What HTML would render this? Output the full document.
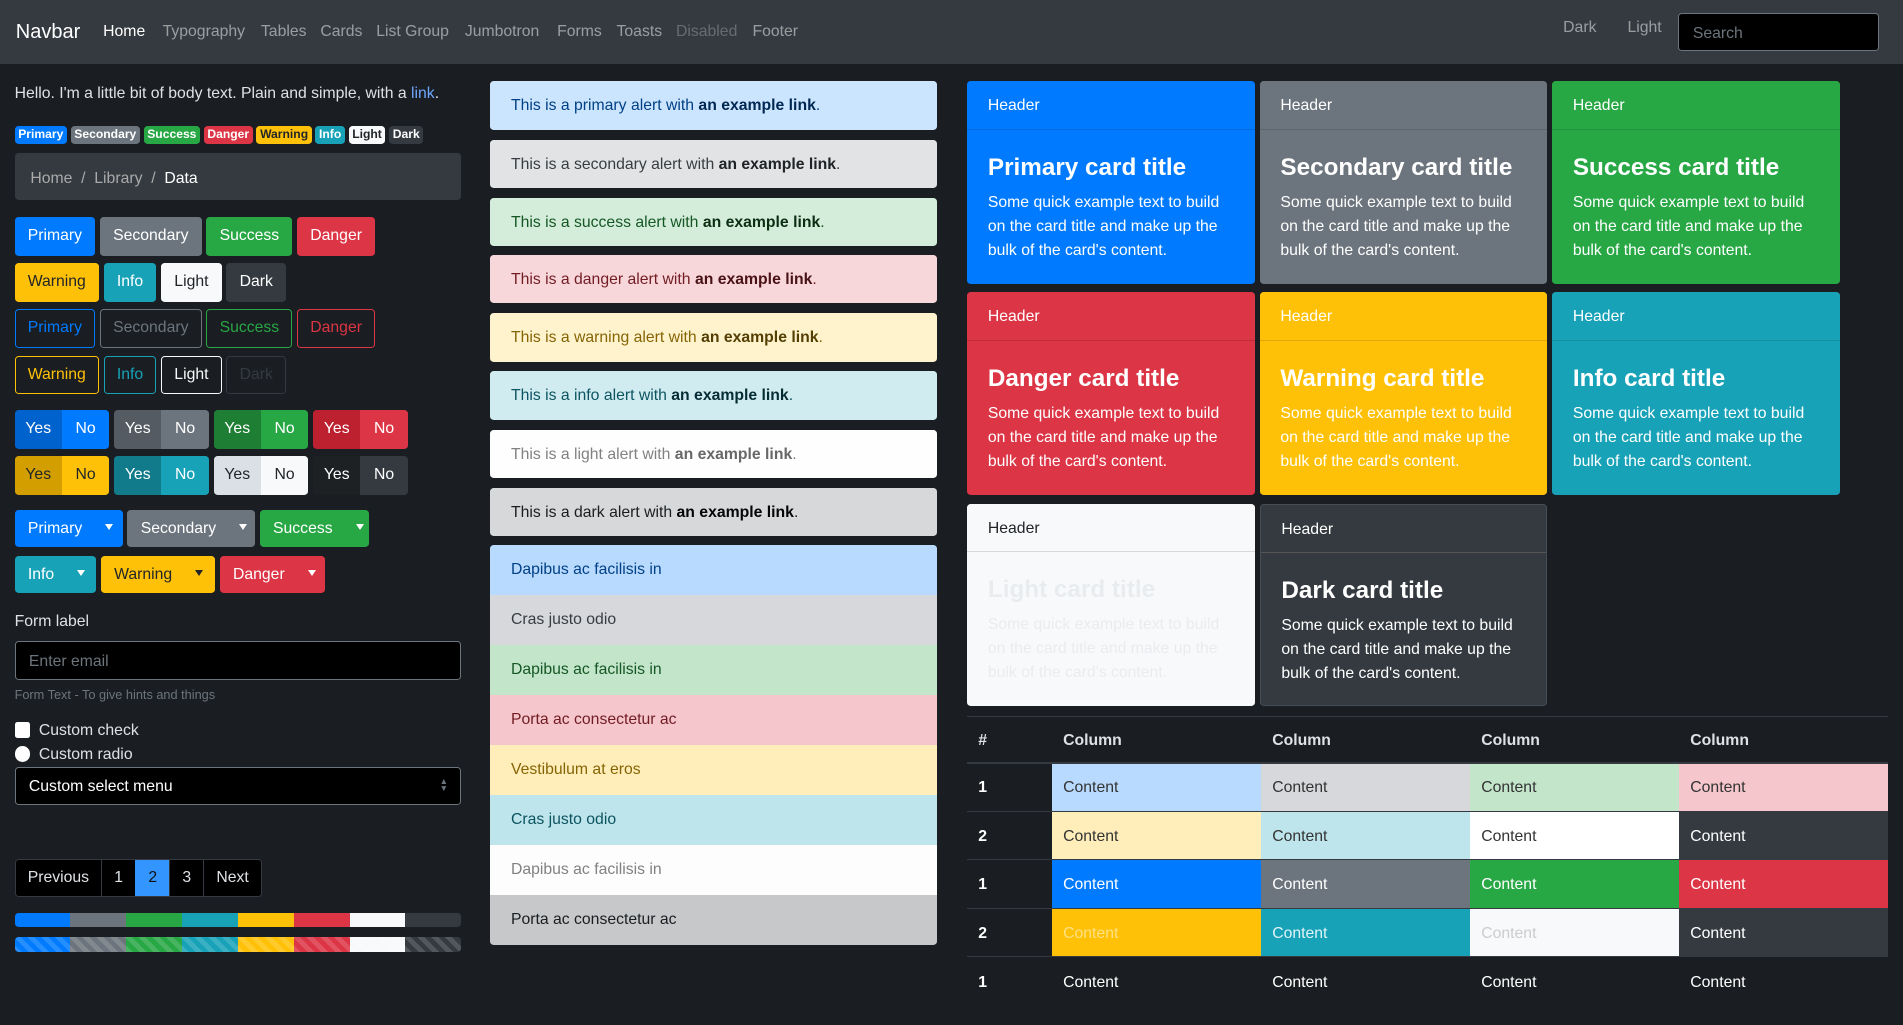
<!DOCTYPE html>
<html><head><meta charset="utf-8"><style>
*{box-sizing:border-box;margin:0;padding:0}
html,body{width:1903px;height:1025px;overflow:hidden;background:#1a1d21}
#z{zoom:1.21365;width:1568px;height:845px;position:relative;font-family:"Liberation Sans",sans-serif;font-size:13px;color:#dee2e6}
.a{position:absolute}
.nav{left:0;top:0;width:1568px;height:53px;background:#343a40}
.nav span{position:absolute;top:19px;color:rgba(255,255,255,.5);font-size:13px}
.badge{display:inline-block;font-size:10px;font-weight:bold;padding:2px 3px;border-radius:3px;margin-right:3px;line-height:11px}
.row{display:flex;gap:4px;position:absolute;left:12px}
.btn{height:32px;padding:0 10px;border-radius:3px;font-size:13px;border:1px solid transparent;line-height:30px;white-space:nowrap}
.grp{display:flex;width:78px;height:32px;border-radius:3px;overflow:hidden}
.grp div{flex:1;text-align:center;line-height:32px}
.split{display:flex;height:31px;border-radius:3px;overflow:hidden;line-height:31px}
.split .t{padding:0 11px;flex:1}
.split .c{width:26px;position:relative}
.split .c:after{content:"";position:absolute;left:8px;top:12px;border:4px solid transparent;border-top:5px solid currentColor;border-bottom:0}
.alert{position:absolute;left:404px;width:368px;height:40px;border-radius:3px;padding-left:17px;line-height:41px;font-size:13px}
.alert b{font-weight:bold}
.li{height:41.25px;line-height:42px;padding-left:17px}
.card{position:absolute;width:237px;height:167px;border-radius:3px;color:#fff;overflow:hidden}
.card .h{height:40px;line-height:41px;padding-left:17px;border-bottom:1px solid rgba(0,0,0,.125);font-size:13px}
.card .t{margin:19px 0 0 17px;font-size:20px;font-weight:bold;line-height:24px}
.card .p{margin:7px 0 0 17px;font-size:13px;line-height:20px;width:196px}
table{position:absolute;left:797px;top:590px;width:759px;border-collapse:collapse;border-top:1px solid #343a40}
td,th{height:40px;padding-left:9px;padding-top:2px;text-align:left;font-size:13px;border-top:1px solid #343a40}
th{height:38px;border-bottom:2px solid #343a40;border-top:0}
td:first-child,th:first-child{width:70px;padding-left:9px;font-weight:bold}
td{color:#333}
.pg{position:absolute;left:12px;top:708px;display:flex;border:1px solid #343a40;border-radius:3px;overflow:hidden;height:31px;background:#000}
.pg div{padding:0 10px;line-height:29px;border-left:1px solid #343a40}
.prog{position:absolute;left:12px;width:368px;height:12px;display:flex;border-radius:3px;overflow:hidden}
.prog div{flex:1}
.st div{background-image:repeating-linear-gradient(45deg,rgba(255,255,255,.15) 0 4px,transparent 4px 8px)}
</style></head><body><div id="z">
<div class="a nav">
<span style="left:13px;top:17px;color:#fff;font-size:16.5px">Navbar</span>
<span style="left:85px;color:#fff">Home</span><span style="left:134px">Typography</span><span style="left:215px">Tables</span><span style="left:264px">Cards</span><span style="left:310px">List Group</span><span style="left:383px">Jumbotron</span><span style="left:459px">Forms</span><span style="left:508px">Toasts</span><span style="left:557px;color:rgba(255,255,255,.25)">Disabled</span><span style="left:620px">Footer</span>
<span style="left:1288px;top:16px">Dark</span><span style="left:1341px;top:16px">Light</span>
<div class="a" style="left:1383px;top:11px;width:165px;height:31px;background:#000;border:1px solid #6c757d;border-radius:3px;color:#6c757d;padding:9px 0 0 11px;font-size:13px">Search</div>
</div>

<div class="a" style="left:12px;top:70px;font-size:13px">Hello. I'm a little bit of body text. Plain and simple, with a <span style="color:#6ea8fe">link</span>.</div>
<div class="a" style="left:12px;top:103px;white-space:nowrap"><span class="badge" style="background:#007bff;color:#fff">Primary</span><span class="badge" style="background:#6c757d;color:#fff">Secondary</span><span class="badge" style="background:#28a745;color:#fff">Success</span><span class="badge" style="background:#dc3545;color:#fff">Danger</span><span class="badge" style="background:#ffc107;color:#212529">Warning</span><span class="badge" style="background:#17a2b8;color:#fff">Info</span><span class="badge" style="background:#f8f9fa;color:#212529">Light</span><span class="badge" style="background:#343a40;color:#fff">Dark</span></div>
<div class="a" style="left:12px;top:126px;width:368px;height:39px;background:#343a40;border-radius:3px;padding:14px 0 0 13px;color:#aaa">Home &nbsp;/&nbsp; Library &nbsp;/&nbsp; <span style="color:#fff">Data</span></div>

<div class="row" style="top:179px"><div class="btn" style="background:#007bff;color:#fff">Primary</div><div class="btn" style="background:#6c757d;color:#fff">Secondary</div><div class="btn" style="background:#28a745;color:#fff">Success</div><div class="btn" style="background:#dc3545;color:#fff">Danger</div></div>
<div class="row" style="top:217px"><div class="btn" style="background:#ffc107;color:#212529">Warning</div><div class="btn" style="background:#17a2b8;color:#fff">Info</div><div class="btn" style="background:#f8f9fa;color:#212529">Light</div><div class="btn" style="background:#343a40;color:#fff">Dark</div></div>
<div class="row" style="top:255px"><div class="btn" style="border-color:#007bff;color:#007bff">Primary</div><div class="btn" style="border-color:#6c757d;color:#6c757d">Secondary</div><div class="btn" style="border-color:#28a745;color:#28a745">Success</div><div class="btn" style="border-color:#dc3545;color:#dc3545">Danger</div></div>
<div class="row" style="top:293px"><div class="btn" style="border-color:#ffc107;color:#ffc107">Warning</div><div class="btn" style="border-color:#17a2b8;color:#17a2b8">Info</div><div class="btn" style="border-color:#f8f9fa;color:#f8f9fa">Light</div><div class="btn" style="border-color:#343a40;color:#343a40">Dark</div></div>

<div class="row" style="top:338px"><div class="grp" style="color:#fff"><div style="background:#0062cc">Yes</div><div style="background:#007bff">No</div></div><div class="grp" style="color:#fff"><div style="background:#545b62">Yes</div><div style="background:#6c757d">No</div></div><div class="grp" style="color:#fff"><div style="background:#1e7e34">Yes</div><div style="background:#28a745">No</div></div><div class="grp" style="color:#fff"><div style="background:#bd2130">Yes</div><div style="background:#dc3545">No</div></div></div>
<div class="row" style="top:376px"><div class="grp" style="color:#212529"><div style="background:#d39e00">Yes</div><div style="background:#ffc107">No</div></div><div class="grp" style="color:#fff"><div style="background:#117a8b">Yes</div><div style="background:#17a2b8">No</div></div><div class="grp" style="color:#212529"><div style="background:#dae0e5">Yes</div><div style="background:#f8f9fa">No</div></div><div class="grp" style="color:#fff"><div style="background:#1d2124">Yes</div><div style="background:#343a40">No</div></div></div>

<div class="row" style="top:420px"><div class="split" style="width:89px;background:#007bff;color:#fff"><div class="t">Primary</div><div class="c"></div></div><div class="split" style="width:105px;background:#6c757d;color:#fff"><div class="t">Secondary</div><div class="c"></div></div><div class="split" style="width:90px;background:#28a745;color:#fff"><div class="t">Success</div><div class="c"></div></div></div>
<div class="row" style="top:458px"><div class="split" style="width:67px;background:#17a2b8;color:#fff"><div class="t">Info</div><div class="c"></div></div><div class="split" style="width:94px;background:#ffc107;color:#212529"><div class="t">Warning</div><div class="c"></div></div><div class="split" style="width:87px;background:#dc3545;color:#fff"><div class="t">Danger</div><div class="c"></div></div></div>

<div class="a" style="left:12px;top:505px">Form label</div>
<div class="a" style="left:12px;top:528px;width:368px;height:32px;background:#000;border:1px solid #6c757d;border-radius:3px;color:#6c757d;padding:9px 0 0 11px">Enter email</div>
<div class="a" style="left:12px;top:566px;font-size:10.5px;color:#6c757d">Form Text - To give hints and things</div>
<div class="a" style="left:12px;top:595px;width:13px;height:13px;background:#fff;border-radius:2px"></div>
<div class="a" style="left:32px;top:595px">Custom check</div>
<div class="a" style="left:12px;top:615px;width:13px;height:13px;background:#fff;border-radius:50%"></div>
<div class="a" style="left:32px;top:615px">Custom radio</div>
<div class="a" style="left:12px;top:632px;width:368px;height:31px;background:#000;border:1px solid #6c757d;border-radius:3px;color:#fff;padding:8px 0 0 11px">Custom select menu<span style="position:absolute;right:10px;top:8px;font-size:7px;color:#6c757d;line-height:6px">▲<br>▼</span></div>
<div class="pg"><div style="border:0">Previous</div><div>1</div><div style="background:#3395ff;color:#111;border-color:#3395ff">2</div><div>3</div><div>Next</div></div>
<div class="prog" style="top:752px"><div style="background:#007bff"></div><div style="background:#6c757d"></div><div style="background:#28a745"></div><div style="background:#17a2b8"></div><div style="background:#ffc107"></div><div style="background:#dc3545"></div><div style="background:#f8f9fa"></div><div style="background:#343a40"></div></div>
<div class="prog st" style="top:772px"><div style="background-color:#007bff"></div><div style="background-color:#6c757d"></div><div style="background-color:#28a745"></div><div style="background-color:#17a2b8"></div><div style="background-color:#ffc107"></div><div style="background-color:#dc3545"></div><div style="background-color:#f8f9fa"></div><div style="background-color:#343a40"></div></div>

<div class="alert" style="top:67px;background:#cce5ff;color:#004085">This is a primary alert with <b style="color:#002752">an example link</b>.</div>
<div class="alert" style="top:115px;background:#e2e3e5;color:#383d41">This is a secondary alert with <b style="color:#202326">an example link</b>.</div>
<div class="alert" style="top:163px;background:#d4edda;color:#155724">This is a success alert with <b style="color:#0b2e13">an example link</b>.</div>
<div class="alert" style="top:210px;background:#f8d7da;color:#721c24">This is a danger alert with <b style="color:#491217">an example link</b>.</div>
<div class="alert" style="top:258px;background:#fff3cd;color:#856404">This is a warning alert with <b style="color:#533f03">an example link</b>.</div>
<div class="alert" style="top:306px;background:#d1ecf1;color:#0c5460">This is a info alert with <b style="color:#062c33">an example link</b>.</div>
<div class="alert" style="top:354px;background:#fefefe;color:#818182">This is a light alert with <b style="color:#686868">an example link</b>.</div>
<div class="alert" style="top:402px;background:#d6d8d9;color:#1b1e21">This is a dark alert with <b style="color:#040505">an example link</b>.</div>

<div class="a" style="left:404px;top:449px;width:368px;height:330px;border-radius:3px;overflow:hidden">
<div class="li" style="background:#b8daff;color:#004085">Dapibus ac facilisis in</div>
<div class="li" style="background:#d6d8db;color:#383d41">Cras justo odio</div>
<div class="li" style="background:#c3e6cb;color:#155724">Dapibus ac facilisis in</div>
<div class="li" style="background:#f5c6cb;color:#721c24">Porta ac consectetur ac</div>
<div class="li" style="background:#ffeeba;color:#856404">Vestibulum at eros</div>
<div class="li" style="background:#bee5eb;color:#0c5460">Cras justo odio</div>
<div class="li" style="background:#fdfdfe;color:#818182">Dapibus ac facilisis in</div>
<div class="li" style="background:#c6c8ca;color:#1b1e21">Porta ac consectetur ac</div>
</div>

<div class="card" style="left:797px;top:67px;background:#007bff"><div class="h">Header</div><div class="t">Primary card title</div><div class="p">Some quick example text to build on the card title and make up the bulk of the card's content.</div></div>
<div class="card" style="left:1038px;top:67px;background:#6c757d"><div class="h">Header</div><div class="t">Secondary card title</div><div class="p">Some quick example text to build on the card title and make up the bulk of the card's content.</div></div>
<div class="card" style="left:1279px;top:67px;background:#28a745"><div class="h">Header</div><div class="t">Success card title</div><div class="p">Some quick example text to build on the card title and make up the bulk of the card's content.</div></div>
<div class="card" style="left:797px;top:241px;background:#dc3545"><div class="h">Header</div><div class="t">Danger card title</div><div class="p">Some quick example text to build on the card title and make up the bulk of the card's content.</div></div>
<div class="card" style="left:1038px;top:241px;background:#ffc107"><div class="h">Header</div><div class="t">Warning card title</div><div class="p">Some quick example text to build on the card title and make up the bulk of the card's content.</div></div>
<div class="card" style="left:1279px;top:241px;background:#17a2b8"><div class="h">Header</div><div class="t">Info card title</div><div class="p">Some quick example text to build on the card title and make up the bulk of the card's content.</div></div>
<div class="card" style="left:797px;top:415px;background:#f8f9fa;color:#e9ecef"><div class="h" style="color:#212529">Header</div><div class="t">Light card title</div><div class="p">Some quick example text to build on the card title and make up the bulk of the card's content.</div></div>
<div class="card" style="left:1038px;top:415px;background:#343a40;border:1px solid #454d55"><div class="h" style="border-color:#555">Header</div><div class="t">Dark card title</div><div class="p">Some quick example text to build on the card title and make up the bulk of the card's content.</div></div>

<table>
<tr><th>#</th><th>Column</th><th>Column</th><th>Column</th><th>Column</th></tr>
<tr><td style="color:#fff">1</td><td style="background:#b8daff">Content</td><td style="background:#d6d8db">Content</td><td style="background:#c3e6cb">Content</td><td style="background:#f5c6cb">Content</td></tr>
<tr><td style="color:#fff">2</td><td style="background:#ffeeba">Content</td><td style="background:#bee5eb">Content</td><td style="background:#fff">Content</td><td style="background:#343a40;color:#fff">Content</td></tr>
<tr><td style="color:#fff">1</td><td style="background:#007bff;color:#fff">Content</td><td style="background:#6c757d;color:#fff">Content</td><td style="background:#28a745;color:#fff">Content</td><td style="background:#dc3545;color:#fff">Content</td></tr>
<tr><td style="color:#fff">2</td><td style="background:#ffc107;color:#ffe083">Content</td><td style="background:#17a2b8;color:#e0f4f7">Content</td><td style="background:#f8f9fa;color:#ccc">Content</td><td style="background:#343a40;color:#fff">Content</td></tr>
<tr><td style="color:#fff">1</td><td style="color:#fff">Content</td><td style="color:#fff">Content</td><td style="color:#fff">Content</td><td style="color:#fff">Content</td></tr>
</table>
</div></body></html>
